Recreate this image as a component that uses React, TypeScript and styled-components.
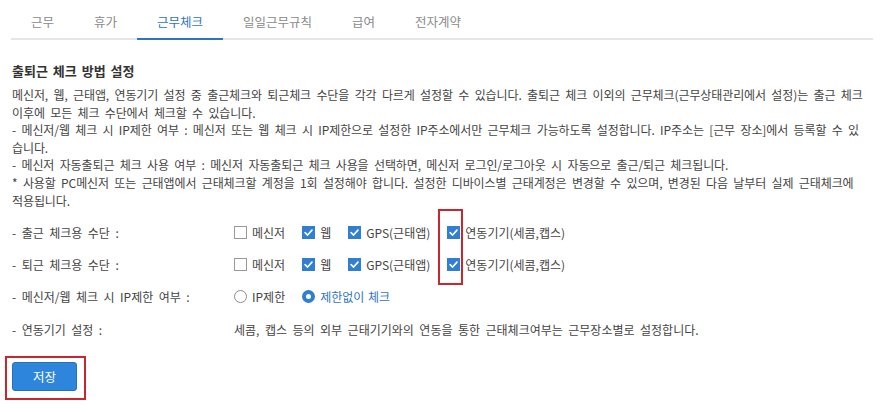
import styled, { createGlobalStyle } from 'styled-components'

const GlobalStyle = createGlobalStyle`
	html, body {
		margin: 0;
		padding: 0;
		background: #ffffff;
	}
	body {
		font-family: 'Noto Sans CJK KR', 'Noto Sans', sans-serif;
		color: #444444;
		font-size: 12px;
		word-spacing: 2.8px;
	}
`

const Page = styled.div`
	width: 880px;
	height: 412px;
	padding: 0 9px 0 12px;
	box-sizing: border-box;
	overflow: hidden;
`

const Tabs = styled.div`
	display: flex;
	height: 40px;
	border-bottom: 2px solid #e4e7ea;
	margin: 0 -2px 0 -1px;
	box-sizing: border-box;
`

const Tab = styled.div<{ $active?: boolean }>`
	display: flex;
	align-items: center;
	padding: 4px 20px 0;
	margin-bottom: -2px;
	font-size: 12.5px;
	color: ${(p) => (p.$active ? '#2f74c0' : '#8a8a8a')};
	border-bottom: 2px solid ${(p) => (p.$active ? '#2f74c0' : 'transparent')};
`

const Section = styled.div`
	padding-top: 21px;
`

const Title = styled.h3`
	margin: 0 0 5px;
	font-size: 13px;
	font-weight: bold;
	color: #333333;
	line-height: 20px;
	word-spacing: 2px;
`

const Description = styled.p`
	margin: 0;
	padding-right: 1.5px;
	line-height: 17.6px;
	font-size: 12px;
	letter-spacing: -0.1px;
	color: #444444;
`

const Form = styled.div`
	position: relative;
	margin-top: 7px;
	display: flex;
	flex-direction: column;
`

const Row = styled.div`
	display: grid;
	grid-template-columns: 222px 1fr;
	align-items: center;
	height: 32.3px;
`

const Label = styled.div`
	color: #444444;
`

const Options = styled.div`
	display: flex;
	align-items: center;
	gap: 17px;
`

const Option = styled.label<{ $selected?: boolean }>`
	display: flex;
	align-items: center;
	gap: 5px;
	word-spacing: 1px;
	color: ${(p) => (p.$selected ? '#2f74c0' : '#444444')};
`

const Box = styled.span<{ $checked?: boolean }>`
	width: 13px;
	height: 13px;
	box-sizing: border-box;
	border: 1px solid ${(p) => (p.$checked ? '#2f7fd3' : '#9a9a9a')};
	background: ${(p) => (p.$checked ? '#2f7fd3' : '#ffffff')};
	display: flex;
	align-items: center;
	justify-content: center;
`

const Radio = styled.span<{ $checked?: boolean }>`
	width: 13px;
	height: 13px;
	box-sizing: border-box;
	border-radius: 50%;
	border: ${(p) => (p.$checked ? '4px solid #2f7fd3' : '1px solid #8c8c8c')};
	background: #ffffff;
`

// red annotation around the 연동기기 checkboxes
const Highlight = styled.div`
	position: absolute;
	left: 426px;
	top: -7px;
	width: 25px;
	height: 76px;
	border: 2px solid #c9262e;
	box-sizing: border-box;
	pointer-events: none;
`

const SaveArea = styled.div`
	margin-top: 11px;
	margin-left: -7px;
	display: inline-flex;
	border: 2px solid #c9262e;
	padding: 4px 7px 7px 5px;
`

const SaveButton = styled.button`
	width: 65px;
	height: 29px;
	border: 1px solid #2371bf;
	border-radius: 3px;
	background: #2d86db;
	color: #ffffff;
	font-family: 'Noto Sans CJK KR', 'Noto Sans', sans-serif;
	font-size: 12.5px;
	cursor: pointer;
`

const Check = () => (
	<svg width="11" height="11" viewBox="0 0 12 12">
		<path d="M2.3 6.2 L5 8.8 L9.8 3.4" fill="none" stroke="#ffffff" strokeWidth="1.8" strokeLinecap="round" strokeLinejoin="round" />
	</svg>
)

const CheckOption = ({ label, checked }: { label: string; checked?: boolean }) => (
	<Option>
		<Box $checked={checked}>{checked && <Check />}</Box>
		{label}
	</Option>
)

const tabs = ['근무', '휴가', '근무체크', '일일근무규칙', '급여', '전자계약']

const methods = [
	{ label: '메신저', checked: false },
	{ label: '웹', checked: true },
	{ label: 'GPS(근태앱)', checked: true },
	{ label: '연동기기(세콤,캡스)', checked: true },
]

export default function App() {
	return (
		<>
			<GlobalStyle />
			<Page>
				<Tabs>
					{tabs.map((t) => (
						<Tab key={t} $active={t === '근무체크'}>
							{t}
						</Tab>
					))}
				</Tabs>
				<Section>
					<Title>출퇴근 체크 방법 설정</Title>
					<Description>
						메신저, 웹, 근태앱, 연동기기 설정 중 출근체크와 퇴근체크 수단을 각각 다르게 설정할 수 있습니다. 출퇴근 체크 이외의 근무체크(근무상태관리에서 설정)는 출근 체크 이후에 모든 체크 수단에서 체크할 수 있습니다.
						<br />- 메신저/웹 체크 시 IP제한 여부 : 메신저 또는 웹 체크 시 IP제한으로 설정한 IP주소에서만 근무체크 가능하도록 설정합니다. IP주소는 [근무 장소]에서 등록할 수 있습니다.
						<br />- 메신저 자동출퇴근 체크 사용 여부 : 메신저 자동출퇴근 체크 사용을 선택하면, 메신저 로그인/로그아웃 시 자동으로 출근/퇴근 체크됩니다.
						<br />* 사용할 PC메신저 또는 근태앱에서 근태체크할 계정을 1회 설정해야 합니다. 설정한 디바이스별 근태계정은 변경할 수 있으며, 변경된 다음 날부터 실제 근태체크에 적용됩니다.
					</Description>
					<Form>
						<Row>
							<Label>- 출근 체크용 수단 :</Label>
							<Options>
								{methods.map((m) => (
									<CheckOption key={m.label} label={m.label} checked={m.checked} />
								))}
							</Options>
						</Row>
						<Row>
							<Label>- 퇴근 체크용 수단 :</Label>
							<Options>
								{methods.map((m) => (
									<CheckOption key={m.label} label={m.label} checked={m.checked} />
								))}
							</Options>
						</Row>
						<Row>
							<Label>- 메신저/웹 체크 시 IP제한 여부 :</Label>
							<Options>
								<Option>
									<Radio />
									IP제한
								</Option>
								<Option $selected>
									<Radio $checked />
									제한없이 체크
								</Option>
							</Options>
						</Row>
						<Row>
							<Label>- 연동기기 설정 :</Label>
							<div>세콤, 캡스 등의 외부 근태기기와의 연동을 통한 근태체크여부는 근무장소별로 설정합니다.</div>
						</Row>
						<Highlight />
					</Form>
					<SaveArea>
						<SaveButton>저장</SaveButton>
					</SaveArea>
				</Section>
			</Page>
		</>
	)
}
